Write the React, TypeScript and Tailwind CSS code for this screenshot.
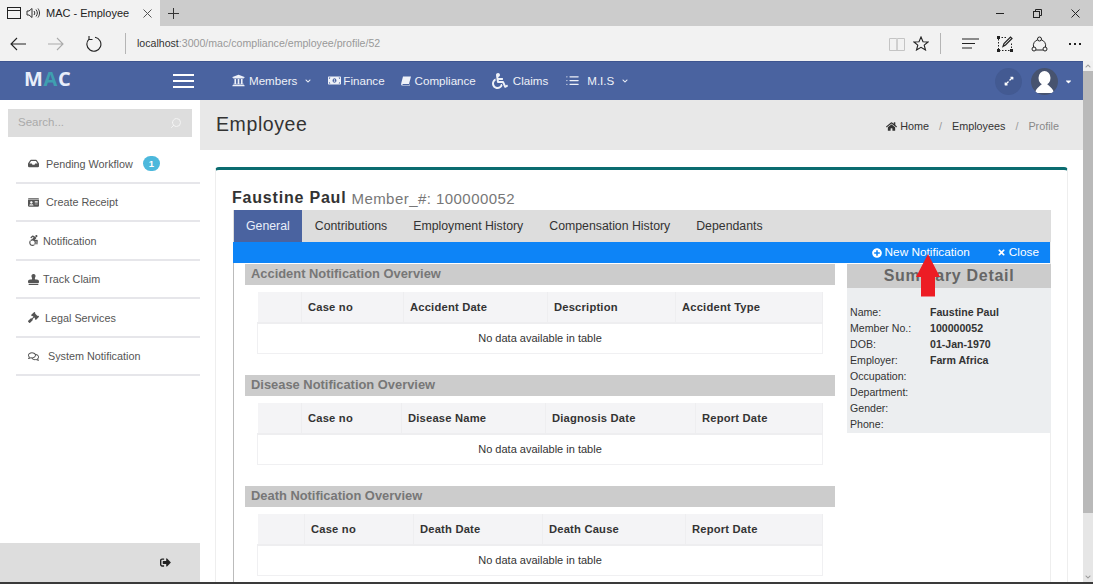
import { ReactNode } from 'react'
import {
    FaUniversity, FaWheelchair, FaInbox, FaIdCard, FaAccessibleIcon, FaStamp, FaGavel,
    FaSignOutAlt, FaHome, FaPlusCircle, FaTimes, FaExpandAlt, FaChevronDown, FaChevronUp, FaCaretDown,
    FaMoneyBillAlt, FaRegComments,
} from 'react-icons/fa'
import { FiSearch, FiList } from 'react-icons/fi'

const sideItems = [
    { label: 'Pending Workflow', icon: <FaInbox />, gap: 'ml-[7px]', badge: true },
    { label: 'Create Receipt', icon: <FaIdCard />, gap: 'ml-[7px]' },
    { label: 'Notification', icon: <FaAccessibleIcon />, gap: 'ml-[4px]' },
    { label: 'Track Claim', icon: <FaStamp />, gap: 'ml-[4px]' },
    { label: 'Legal Services', icon: <FaGavel />, gap: 'ml-[6px]' },
    { label: 'System Notification', icon: <FaRegComments />, gap: 'ml-[9px]' },
]

const sections = [
    {
        title: 'Accident Notification Overview',
        cols: [
            { label: 'Case no', w: 'w-[102px]' },
            { label: 'Accident Date', w: 'w-[144px]' },
            { label: 'Description', w: 'w-[128px]' },
            { label: 'Accident Type', w: '' },
        ],
        first: 'w-[44px]',
    },
    {
        title: 'Disease Notification Overview',
        cols: [
            { label: 'Case no', w: 'w-[100px]' },
            { label: 'Disease Name', w: 'w-[144px]' },
            { label: 'Diagnosis Date', w: 'w-[150px]' },
            { label: 'Report Date', w: '' },
        ],
        first: 'w-[44px]',
    },
    {
        title: 'Death Notification Overview',
        cols: [
            { label: 'Case no', w: 'w-[109px]' },
            { label: 'Death Date', w: 'w-[129px]' },
            { label: 'Death Cause', w: 'w-[143px]' },
            { label: 'Report Date', w: '' },
        ],
        first: 'w-[47px]',
    },
]

const summary = [
    ['Name:', 'Faustine Paul'],
    ['Member No.:', '100000052'],
    ['DOB:', '01-Jan-1970'],
    ['Employer:', 'Farm Africa'],
    ['Occupation:', ''],
    ['Department:', ''],
    ['Gender:', ''],
    ['Phone:', ''],
]

function NavItem({ icon, label, caret, className }: { icon: ReactNode; label: string; caret?: boolean; className: string }) {
    return (
        <div className={`flex items-center text-[11.6px] text-[#eef1f8] ${className}`}>
            {icon}
            <span>{label}</span>
            {caret && <FaChevronDown className="ml-[8px] text-[6px]" />}
        </div>
    )
}

function ChromeTop() {
    return (
        <>
            <div className="flex h-[26px] bg-[#cccccc] text-[#222]">
                <div className="flex w-[160px] items-center bg-[#f2f2f2] pl-[7px]">
                    <svg width="14" height="12" viewBox="0 0 14 12" fill="none" stroke="#222">
                        <rect x="0.5" y="0.5" width="13" height="11" />
                        <path d="M0.5 3.5H13.5" />
                    </svg>
                    <svg className="ml-[5px]" width="14" height="12" viewBox="0 0 14 12" fill="none" stroke="#333">
                        <path d="M1 4H3L6 1.500V10.500L3 8H1Z" />
                        <path d="M8 4C9 5.500 9 6.500 8 8M10 2.500C11.800 5 11.800 7 10 9.500M12 1.500C14 4.500 14 7.500 12 10.500" />
                    </svg>
                    <span className="ml-[6px] w-[77px] whitespace-nowrap text-[11px]">MAC - Employee</span>
                    <svg className="ml-[20px]" width="9" height="9" viewBox="0 0 9 9" stroke="#555">
                        <path d="M0.500 0.500L8.500 8.500M8.500 0.500L0.500 8.500" />
                    </svg>
                </div>
                <svg className="ml-[8px] mt-[8px]" width="11" height="11" viewBox="0 0 11 11" stroke="#333">
                    <path d="M5.500 0V11M0 5.500H11" />
                </svg>
                <div className="ml-auto flex items-center pr-[13px]">
                    <svg width="9" height="9" viewBox="0 0 9 9" stroke="#222"><path d="M0 4.500H8" /></svg>
                    <svg className="ml-[28px]" width="9" height="9" viewBox="0 0 9 9" fill="none" stroke="#222">
                        <rect x="0.500" y="2.500" width="6" height="6" />
                        <path d="M2.500 2.500V0.500H8.500V6.500H6.500" />
                    </svg>
                    <svg className="ml-[29px]" width="9" height="9" viewBox="0 0 9 9" stroke="#222">
                        <path d="M0.500 0.500L8.500 8.500M8.500 0.500L0.500 8.500" />
                    </svg>
                </div>
            </div>
            <div className="flex h-[35px] items-center bg-[#f2f2f2]">
                <svg className="ml-[10px]" width="16" height="14" viewBox="0 0 16 14" fill="none" stroke="#222" strokeWidth="1.100">
                    <path d="M16 7H1M7 1L1 7L7 13" />
                </svg>
                <svg className="ml-[22px]" width="16" height="14" viewBox="0 0 16 14" fill="none" stroke="#aaa" strokeWidth="1.100">
                    <path d="M0 7H15M9 1L15 7L9 13" />
                </svg>
                <svg className="ml-[22px]" width="16" height="16" viewBox="0 0 16 16" fill="none" stroke="#222" strokeWidth="1.100">
                    <path d="M9 1.300A7 7 0 1 1 3 3.200M3 0V3.500H6.500" />
                </svg>
                <div className="ml-[23px] h-[21px] w-px bg-[#b5b5b5]" />
                <div className="ml-[11px] text-[10.6px] text-[#999]">
                    <span className="text-[#333]">localhost</span>:3000/mac/compliance/employee/profile/52
                </div>
                <div className="ml-auto flex items-center pr-[12px]">
                    <svg width="16" height="14" viewBox="0 0 16 14" fill="none" stroke="#c4c4c4">
                        <path d="M0.500 1.500H7.500C8 1.500 8 2 8 2.500V13.500H0.500ZM15.500 1.500H8.500C8 1.500 8 2 8 2.500V13.500H15.500Z" />
                    </svg>
                    <svg className="ml-[8px]" width="16" height="15" viewBox="0 0 16 15" fill="none" stroke="#222" strokeWidth="1.100">
                        <path d="M8 1L10 5.800L15 6L11.200 9.200L12.500 14L8 11.300L3.500 14L4.800 9.200L1 6L6 5.800Z" />
                    </svg>
                    <div className="ml-[11px] h-[21px] w-px bg-[#b5b5b5]" />
                    <svg className="ml-[21px]" width="17" height="11" viewBox="0 0 17 11" stroke="#222" strokeWidth="1.100">
                        <path d="M0 1H17M0 5.500H13M0 10H10" />
                    </svg>
                    <svg className="ml-[18px]" width="16" height="16" viewBox="0 0 16 16" fill="none" stroke="#222">
                        <path d="M1.500 1.500H10M1.500 3V14.500H14.500V7" strokeDasharray="1.500 1.500" />
                        <path d="M6 10.500L7 7.500L13.500 1L15 2.500L8.500 9Z" strokeWidth="1.200" />
                        <path d="M0 0H3V3H0ZM0 13H3V16H0ZM13 13H16V16H13Z" fill="#222" stroke="none" />
                    </svg>
                    <svg className="ml-[18px]" width="17" height="16" viewBox="0 0 17 16" fill="none" stroke="#222">
                        <circle cx="8.500" cy="3" r="2" />
                        <circle cx="3" cy="13" r="2" />
                        <circle cx="14" cy="13" r="2" />
                        <path d="M6.700 3.800A6 6 0 0 0 2.500 11M10.300 3.800A6 6 0 0 1 14.500 11M5 14H12" />
                    </svg>
                    <div className="ml-[21px] flex gap-[3px]">
                        <span className="h-[2px] w-[2px] bg-[#222]" />
                        <span className="h-[2px] w-[2px] bg-[#222]" />
                        <span className="h-[2px] w-[2px] bg-[#222]" />
                    </div>
                </div>
            </div>
        </>
    )
}

function Overview({ section }: { section: (typeof sections)[number] }) {
    return (
        <div className="mb-[21.5px]">
            <div className="flex h-[21px] items-center bg-[#cccccc] pb-px pl-[6px] text-[12.9px] font-bold text-[#777]">
                {section.title}
            </div>
            <table className="ml-3 mt-[7px] w-[566px] table-fixed border-collapse text-[11px] text-[#333]">
                <thead>
                    <tr className="h-[31px] border-b-[2px] border-[#eeeef0] bg-[#f4f4f6]">
                        <th className={`${section.first} border-r border-[#eeeef0]`} />
                        {section.cols.map((col) => (
                            <th key={col.label} className={`${col.w} border-r border-[#eeeef0] pl-[6px] text-left text-[11.2px] font-bold tracking-[0.2px]`}>
                                {col.label}
                            </th>
                        ))}
                    </tr>
                </thead>
                <tbody>
                    <tr className="h-[30px] border border-[#f0f0f2]">
                        <td colSpan={5} className="text-center">No data available in table</td>
                    </tr>
                </tbody>
            </table>
        </div>
    )
}

export default function App() {
    return (
        <div className="relative flex h-[584px] w-[1093px] flex-col overflow-hidden bg-white font-['Liberation_Sans',Arial,sans-serif]">
            <ChromeTop />

            <div className="flex min-h-0 flex-1">
                <div className="flex min-w-0 flex-1 flex-col">
                    {/* top nav */}
                    <div className="flex h-[39px] shrink-0 items-center border-t border-[#3e5590] bg-[#4a63a0]">
                        <div className="-mt-[5px] ml-[24px] w-[149px] font-['Open_Sans',sans-serif] text-[20px] font-bold leading-none tracking-[0.6px] text-[#e8eefa]">
                            M<span className="text-[#3f9fb0]">A</span>C
                        </div>
                        <div className="flex w-[21px] flex-col gap-[4px]">
                            <span className="h-[2px] bg-white" />
                            <span className="h-[2px] bg-white" />
                            <span className="h-[2px] bg-white" />
                        </div>
                        <NavItem className="ml-[38px]" icon={<FaUniversity className="mr-[4px] text-[13px]" />} label="Members" caret />
                        <NavItem className="ml-[17px]" icon={<FaMoneyBillAlt className="mr-[2px] text-[13px]" />} label="Finance" />
                        <NavItem
                            className="ml-[16px]"
                            icon={
                                <svg className="mr-[4px]" width="10" height="10" viewBox="0 0 10 10" fill="currentColor">
                                    <path d="M2 0.500H10L8 8H1.800C1.300 8 1.300 9 1.800 9H8.500L9 7.500V9.500H1C0 9.500 0 8 0.300 7Z" />
                                </svg>
                            }
                            label="Compliance"
                        />
                        <NavItem className="ml-[16px]" icon={<FaWheelchair className="mr-[5px] text-[16px]" />} label="Claims" />
                        <NavItem className="ml-[17px]" icon={<FiList className="mr-[7px] text-[15px]" />} label="M.I.S" caret />
                        <div className="ml-auto flex h-[27px] w-[27px] items-center justify-center rounded-full bg-[#435a92] text-[10px] text-white">
                            <FaExpandAlt />
                        </div>
                        <div className="ml-[9px] h-[27px] w-[27px] overflow-hidden rounded-full bg-[#47536f]">
                            <svg viewBox="0 0 27 27" width="27" height="27" fill="white">
                                <ellipse cx="13.500" cy="10" rx="6" ry="7" />
                                <path d="M4 25C5 20 9 18 11 16H16C18 18 22 20 23 25Z" />
                            </svg>
                        </div>
                        <FaCaretDown className="ml-[6px] mr-[10px] text-[9px] text-white" />
                    </div>

                    <div className="flex min-h-0 flex-1">
                        {/* sidebar */}
                        <div className="flex w-[200px] shrink-0 flex-col bg-white">
                            <div className="mx-2 mt-[9px] flex h-[28px] items-center justify-between bg-[#dddddd] px-[10px] text-[11.5px] text-[#aaa]">
                                <span>Search...</span>
                                <FiSearch className="-scale-x-100 text-[12px] text-[#f4f4f4]" />
                            </div>
                            <div className="ml-4 mt-[8px] flex-1">
                                {sideItems.map((item) => (
                                    <div key={item.label} className="flex h-[38.5px] items-center border-b-[2px] border-[#e6e6ea] pl-[12px] pt-[1px] text-[10.8px] text-[#555]">
                                        <span className="text-[11px] text-[#555]">{item.icon}</span>
                                        <span className={item.gap}>{item.label}</span>
                                        {item.badge && (
                                            <span className="ml-[10px] flex h-[15px] w-[17px] items-center justify-center rounded-full bg-[#4cb8dc] text-[9.5px] font-bold text-white">
                                                1
                                            </span>
                                        )}
                                    </div>
                                ))}
                            </div>
                            <div className="flex h-[39px] shrink-0 items-center justify-end bg-[#dddddd] pr-[29px] text-[11px] text-[#222]">
                                <FaSignOutAlt />
                            </div>
                        </div>

                        {/* main */}
                        <div className="flex min-w-0 flex-1 flex-col overflow-hidden">
                            <div className="flex h-[50px] shrink-0 items-center justify-between bg-[#e8e8e8] pl-[16px] pr-[24px]">
                                <span className="text-[19.5px] tracking-[0.6px] text-[#333]">Employee</span>
                                <div className="flex items-center pt-[2px] text-[10.8px] text-[#333]">
                                    <FaHome className="mr-[3px] text-[11px]" />
                                    <span>Home</span>
                                    <span className="mx-[10px] text-[#999]">/</span>
                                    <span>Employees</span>
                                    <span className="mx-[10px] text-[#999]">/</span>
                                    <span className="text-[#888]">Profile</span>
                                </div>
                            </div>

                            <div className="ml-[15px] mr-[15px] mt-[17px] flex min-h-0 flex-1 flex-col rounded-t-[4px] border-x border-t-[3px] border-x-[#eeeeee] border-t-[#0b6c70] pl-[17px] pr-4">
                                <div className="-ml-px flex h-[40px] shrink-0 items-end">
                                    <span className="text-[16px] font-bold tracking-[0.8px] text-[#333]">Faustine Paul</span>
                                    <span className="ml-[5px] text-[15px] tracking-[0.45px] text-[#777]">Member_#: 100000052</span>
                                </div>
                                <div className="flex h-[32px] shrink-0 bg-[#dddddd] pl-px text-[12.3px] text-[#333]">
                                    <div className="flex items-center bg-[#4a63a0] px-[12px] text-[#e8eefa]">General</div>
                                    <div className="flex items-center px-[13px]">Contributions</div>
                                    <div className="flex items-center px-[13px]">Employment History</div>
                                    <div className="flex items-center px-[13px]">Compensation History</div>
                                    <div className="flex items-center px-[13px]">Dependants</div>
                                </div>
                                <div className="flex min-h-0 flex-1 flex-col border-l border-r border-l-[#bbbbbb] border-r-[#eeeeee]">
                                    <div className="-ml-px flex h-[21px] shrink-0 items-center justify-end bg-[#0d84f7] pr-[11px] text-[11.8px] text-white">
                                        <FaPlusCircle className="mr-[3px] text-[10px]" />
                                        <span>New Notification</span>
                                        <FaTimes className="ml-[27px] mr-[3px] text-[9px]" />
                                        <span>Close</span>
                                    </div>
                                    <div className="mt-px flex gap-3 pl-[11px]">
                                        <div className="w-[590px] shrink-0">
                                            {sections.map((section) => (
                                                <Overview key={section.title} section={section} />
                                            ))}
                                        </div>
                                        <div className="w-[204px] shrink-0 self-start bg-[#eceef0]">
                                            <div className="flex h-[24px] items-center justify-center bg-[#cccccc] text-[16px] font-bold tracking-[0.7px] text-[#666]">
                                                Summary Detail
                                            </div>
                                            <div className="pb-[1px] pl-[3px] pt-[16px] text-[10.6px] leading-[16px] text-[#333]">
                                                {summary.map(([label, value]) => (
                                                    <div key={label} className="flex">
                                                        <span className="w-[80px]">{label}</span>
                                                        <span className="font-bold">{value}</span>
                                                    </div>
                                                ))}
                                            </div>
                                        </div>
                                    </div>
                                </div>
                            </div>
                        </div>
                    </div>
                </div>

                {/* page scrollbar */}
                <div className="flex w-[10px] shrink-0 flex-col bg-[#e6e6e6] text-[#999]">
                    <div className="flex h-[10px] items-center justify-center bg-[#f0f0f0] text-[6px]"><FaChevronUp /></div>
                    <div className="h-[442px] bg-[#b9b9b9]" />
                    <div className="mt-auto flex h-[10px] items-center justify-center text-[6px]"><FaChevronDown /></div>
                </div>
            </div>

            <div className="h-[2px] shrink-0 bg-[#3a3a3a]" />

            {/* annotation arrow drawn over the screenshot */}
            <svg className="absolute left-[916px] top-[254px]" width="24" height="43" viewBox="0 0 24 43" fill="#ed1c24">
                <path d="M12 0L24 23H19V42.500H5V23H0Z" />
            </svg>
        </div>
    )
}
